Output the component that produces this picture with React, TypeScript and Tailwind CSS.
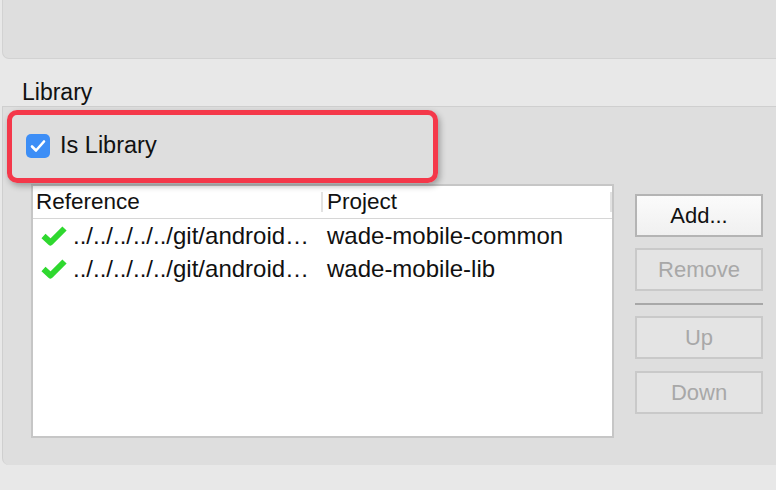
const font = { fontFamily: '"Liberation Sans", Arial, sans-serif' };

const GreenCheck = () => (
  <svg width="26" height="21" viewBox="0 0 26 21" className="shrink-0">
    <path d="M2.5 11 L9.5 17.5 L23.5 3.5" fill="none" stroke="#2fd82f" strokeWidth="6" strokeLinejoin="round" />
  </svg>
);

const rows = [
  { ref: "../../../../../git/android…", project: "wade-mobile-common" },
  { ref: "../../../../../git/android…", project: "wade-mobile-lib" },
];

const btnBase = "h-[43px] w-[128px] border-2 text-[22px] flex items-center justify-center";
const btnEnabled = btnBase + " bg-gradient-to-b from-[#fbfbfb] to-[#f0f0f0] border-[#b4b4b4] text-[#111]";
const btnDisabled = btnBase + " bg-[#e4e4e4] border-[#c9c9c9] text-[#a8a8a8]";

export default function App() {
  return (
    <div className="w-[776px] h-[490px] bg-[#e8e8e8] overflow-hidden text-[#111]" style={font}>
      <div className="ml-[2px] h-[59px] bg-[#dedede] rounded-bl-[7px] border-l border-b border-[#d2d2d2]" />

      <div className="pl-[22px] pt-[20px] h-[47px] text-[23px] leading-[26px]">Library</div>

      <div className="relative ml-[2px] h-[359px] bg-[#dedede] border-t border-l border-[#cfcfcf] rounded-bl-[7px]">
        <div className="absolute left-[4px] top-[3px] w-[431px] h-[73px] rounded-[10px] border-[5px] border-[#f4384a] shadow-[2px_3px_6px_rgba(0,0,0,0.3)]" />

        <div className="h-[77px] pl-[23px] flex items-center gap-[10px]">
          <div className="w-[24px] h-[24px] rounded-[5px] bg-[#3d8ef6] flex items-center justify-center">
            <svg width="16" height="14" viewBox="0 0 16 14">
              <path d="M2 7.5 L6 11.5 L14 2.5" fill="none" stroke="white" strokeWidth="2.6" strokeLinecap="round" strokeLinejoin="round" />
            </svg>
          </div>
          <span className="text-[23.5px]">Is Library</span>
        </div>

        <div className="flex pl-[28px] gap-[21px]">
          <div className="w-[583px] h-[254px] bg-white border-2 border-[#c6c6c6]">
            <div className="flex h-[33px] border-b border-[#d6d6d6] text-[22.5px] items-center">
              <div className="w-[288px] pl-[3px]">Reference</div>
              <div className="w-[2px] h-[20px] bg-[#e2e2e2]" />
              <div className="flex-1 pl-[4px]">Project</div>
              <div className="w-[2px] h-[20px] bg-[#e2e2e2]" />
            </div>
            {rows.map((r, i) => (
              <div key={i} className="flex h-[33px] items-center text-[24px]">
                <div className="w-[290px] pl-[8px] flex items-center gap-[6px] whitespace-nowrap overflow-hidden">
                  <GreenCheck />
                  <span>{r.ref}</span>
                </div>
                <div className="flex-1 pl-[4px] whitespace-nowrap">{r.project}</div>
              </div>
            ))}
          </div>

          <div className="flex flex-col pt-[10px]">
            <div className={btnEnabled}>Add...</div>
            <div className={btnDisabled + " mt-[11px]"}>Remove</div>
            <div className="mt-[12px] h-[2px] bg-[#a8a8a8]" />
            <div className={btnDisabled + " mt-[11px]"}>Up</div>
            <div className={btnDisabled + " mt-[12px]"}>Down</div>
          </div>
        </div>
      </div>
    </div>
  );
}
